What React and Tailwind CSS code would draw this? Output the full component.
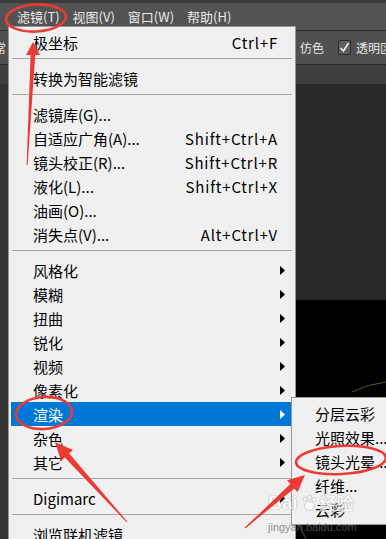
const FONT = { fontFamily: '"Noto Sans CJK SC", "Noto Sans", sans-serif' };

const groups = [
  [{ label: "极坐标", keys: "Ctrl+F" }],
  [{ label: "转换为智能滤镜" }],
  [
    { label: "滤镜库(G)..." },
    { label: "自适应广角(A)...", keys: "Shift+Ctrl+A" },
    { label: "镜头校正(R)...", keys: "Shift+Ctrl+R" },
    { label: "液化(L)...", keys: "Shift+Ctrl+X" },
    { label: "油画(O)..." },
    { label: "消失点(V)...", keys: "Alt+Ctrl+V" },
  ],
  [
    { label: "风格化", sub: true },
    { label: "模糊", sub: true },
    { label: "扭曲", sub: true },
    { label: "锐化", sub: true },
    { label: "视频", sub: true },
    { label: "像素化", sub: true },
    { label: "渲染", sub: true, active: true },
    { label: "杂色", sub: true },
    { label: "其它", sub: true },
  ],
  [{ label: "Digimarc", sub: true }],
  [{ label: "浏览联机滤镜..." }],
];

const renderItems = ["分层云彩", "光照效果...", "镜头光晕...", "纤维...", "云彩"];

function SubArrow({ color }) {
  return (
    <svg width="5" height="9" viewBox="0 0 5 9" aria-hidden>
      <path d="M0 0 L5 4.5 L0 9 Z" fill={color} />
    </svg>
  );
}

function MenuRow({ item }) {
  const on = item.active;
  return (
    <div
      className={`h-[24px] mx-[2px] flex items-center pl-[22px] text-[15px] leading-none ${
        on ? "bg-[#0078d7] text-white" : "text-black"
      }`}
    >
      <span className="flex-1 whitespace-nowrap">{item.label}</span>
      {item.keys ? (
        <span className="whitespace-nowrap tracking-[0.8px]">{item.keys}</span>
      ) : null}
      <span className="w-[15px] flex pl-[2px]">
        {item.sub ? <SubArrow color={on ? "#fff" : "#000"} /> : null}
      </span>
    </div>
  );
}

function Separator() {
  return (
    <div className="h-[12px] pt-[4px] px-[3px]">
      <div className="h-px bg-[#a8a8a8]" />
    </div>
  );
}

function Annotations() {
  const red = "#ec3a34";
  return (
    <svg
      className="absolute inset-0 pointer-events-none"
      width="386"
      height="539"
      viewBox="0 0 386 539"
      aria-hidden
    >
      <g fill="none" stroke={red} strokeWidth="2.6">
        <ellipse cx="36" cy="18" rx="30" ry="13.5" transform="rotate(-3 36 18)" />
        <ellipse cx="44" cy="413" rx="28" ry="16" transform="rotate(-4 44 413)" />
        <ellipse cx="341" cy="460" rx="45" ry="14" transform="rotate(-3 341 460)" />
      </g>
      <g fill={red}>
        <polygon points="33,42 40,55 35.2,55 27.6,165 26.6,165 30.6,55 26,55" />
        <polygon points="55,442 72.9,450 69.2,453.4 127.4,521.7 126.6,522.3 64.8,457.4 61.1,460.8" />
        <polygon points="305,475 297.5,492.3 294.2,488.6 245.3,528.4 244.7,527.6 290.3,484 287,480.3" />
      </g>
    </svg>
  );
}

function Watermark() {
  return (
    <div className="absolute left-[268px] top-[493px] pointer-events-none select-none opacity-70">
      <div className="flex items-center gap-[2px] text-white font-bold [text-shadow:0_0_1px_#8a8a8a,0_0_1px_#8a8a8a]">
        <span className="text-[19px] leading-none" style={{ fontFamily: '"Liberation Sans", sans-serif' }}>
          Bai
        </span>
        <svg width="18" height="18" viewBox="0 0 18 18" aria-hidden>
          <g fill="#ffffff" stroke="#9a9a9a" strokeWidth="0.6">
            <circle cx="5" cy="5" r="2" />
            <circle cx="9.5" cy="3.5" r="2" />
            <circle cx="14" cy="5.5" r="2" />
            <ellipse cx="9.5" cy="12" rx="5" ry="4.5" />
          </g>
        </svg>
        <span className="text-[17px] leading-none">经验</span>
      </div>
      <div
        className="mt-[10px] text-[11px] leading-none text-[#6a6a6a]"
        style={{ fontFamily: '"Liberation Sans", sans-serif' }}
      >
        jingyan.baidu.com
      </div>
    </div>
  );
}

export default function App() {
  return (
    <div
      className="relative w-[386px] h-[539px] overflow-hidden bg-[#282828] flex flex-col"
      style={FONT}
    >
      <div className="h-[3px] bg-[#3c3c3c]" />
      <div className="h-[27px] bg-[#535353] flex items-center pl-[17px] gap-[13px] text-[13px] text-[#eaeaea] leading-none">
        <span>滤镜(T)</span>
        <span>视图(V)</span>
        <span>窗口(W)</span>
        <span>帮助(H)</span>
      </div>
      <div className="h-px bg-[#2e2e2e]" />
      <div className="h-[33px] bg-[#505050] flex items-center text-[12px] text-[#e6e6e6] leading-none whitespace-nowrap">
        <span className="-ml-[6px] w-[14px]">常</span>
        <span className="ml-[294px]">仿色</span>
        <span className="ml-[14px] w-[15px] h-[15px] rounded-[2px] border border-[#2c2c2c] bg-[#5e5e5e] flex items-center justify-center">
          <svg width="11" height="11" viewBox="0 0 11 11" aria-hidden>
            <path d="M1.5 6 L4.5 9 L9.5 1" fill="none" stroke="#f0f0f0" strokeWidth="1.6" />
          </svg>
        </span>
        <span className="ml-[5px]">透明区域</span>
      </div>
      <div className="h-px bg-[#2a2a2a]" />
      <div className="h-[19px] bg-[#3e3e3e]" />
      <div className="flex-1 flex">
        <div className="w-[8px] bg-[#343434]" />
        <div className="flex-1 flex flex-col">
          <div className="h-[216px] bg-[#282828]" />
          <div className="relative flex-1 bg-black">
            <svg className="absolute inset-0" width="378" height="239" viewBox="0 0 378 239" aria-hidden>
              <g fill="none" stroke="#55561e" strokeWidth="1">
                <path d="M344 92 Q360 84 378 82" />
                <path d="M290 222 Q294 231 298 239" />
              </g>
            </svg>
          </div>
        </div>
      </div>

      <div className="absolute left-[8px] top-[26px] w-[288px] bg-[#f0f0f0] border border-[#979797] pt-[3px] pb-[2px]">
        {groups.map((g, gi) => (
          <div key={gi}>
            {gi > 0 ? <Separator /> : null}
            {g.map((item) => (
              <MenuRow key={item.label} item={item} />
            ))}
          </div>
        ))}
      </div>

      <div className="absolute left-[291px] top-[397px] w-[110px] bg-[#f0f0f0] border border-[#9a9a9a] shadow-[2px_2px_3px_rgba(0,0,0,0.3)] py-[3px]">
        {renderItems.map((t) => (
          <div key={t} className="h-[24px] flex items-center pl-[23px] text-[15px] leading-none text-black whitespace-nowrap">
            {t}
          </div>
        ))}
      </div>

      <Watermark />
      <Annotations />
    </div>
  );
}
